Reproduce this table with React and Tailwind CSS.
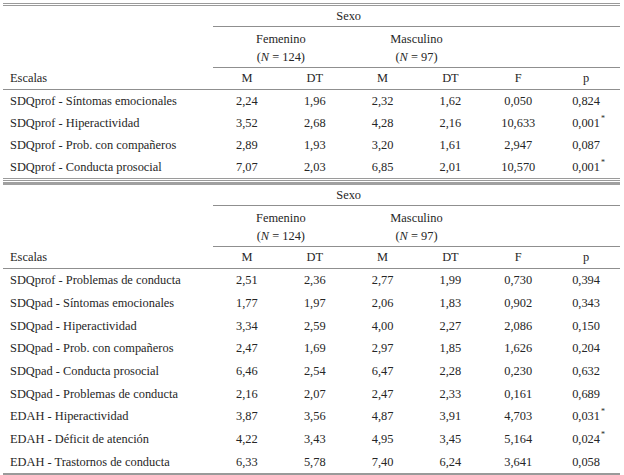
import React from "react";

const t1 = [
  ["SDQprof - Síntomas emocionales", "2,24", "1,96", "2,32", "1,62", "0,050", "0,824"],
  ["SDQprof - Hiperactividad", "3,52", "2,68", "4,28", "2,16", "10,633", "0,001*"],
  ["SDQprof - Prob. con compañeros", "2,89", "1,93", "3,20", "1,61", "2,947", "0,087"],
  ["SDQprof - Conducta prosocial", "7,07", "2,03", "6,85", "2,01", "10,570", "0,001*"],
];

const t2 = [
  ["SDQprof - Problemas de conducta", "2,51", "2,36", "2,77", "1,99", "0,730", "0,394"],
  ["SDQpad - Síntomas emocionales", "1,77", "1,97", "2,06", "1,83", "0,902", "0,343"],
  ["SDQpad - Hiperactividad", "3,34", "2,59", "4,00", "2,27", "2,086", "0,150"],
  ["SDQpad - Prob. con compañeros", "2,47", "1,69", "2,97", "1,85", "1,626", "0,204"],
  ["SDQpad - Conducta prosocial", "6,46", "2,54", "6,47", "2,28", "0,230", "0,632"],
  ["SDQpad - Problemas de conducta", "2,16", "2,07", "2,47", "2,33", "0,161", "0,689"],
  ["EDAH - Hiperactividad", "3,87", "3,56", "4,87", "3,91", "4,703", "0,031*"],
  ["EDAH - Déficit de atención", "4,22", "3,43", "4,95", "3,45", "5,164", "0,024*"],
  ["EDAH - Trastornos de conducta", "6,33", "5,78", "7,40", "6,24", "3,641", "0,058"],
];

function Val({ v }) {
  if (v.endsWith("*")) {
    return (
      <span className="relative">
        {v.slice(0, -1)}
        <span className="absolute left-[calc(100%+1px)] top-[-1px] text-[8px]">*</span>
      </span>
    );
  }
  return <span>{v}</span>;
}

function Header() {
  return (
    <>
      <div className="flex">
        <div className="w-[210px] shrink-0" />
        <div className="flex-1 grid grid-cols-6 border-b border-[#8f8f8f] h-[21px] items-center">
          <div className="col-span-4 text-center">Sexo</div>
        </div>
      </div>
      <div className="flex">
        <div className="w-[210px] shrink-0" />
        <div className="flex-1 grid grid-cols-6 border-b border-[#8f8f8f] h-[41px] pt-[3px] leading-[18px]">
          <div className="col-span-2 text-center">
            <div>Femenino</div>
            <div>
              (<i>N</i> = 124)
            </div>
          </div>
          <div className="col-span-2 text-center">
            <div>Masculino</div>
            <div>
              (<i>N</i> = 97)
            </div>
          </div>
        </div>
      </div>
      <div className="grid grid-cols-[210px_repeat(6,minmax(0,1fr))] h-[22px] items-center border-b border-[#8f8f8f]">
        <div className="pl-[7px]">Escalas</div>
        <div className="text-center">M</div>
        <div className="text-center">DT</div>
        <div className="text-center">M</div>
        <div className="text-center">DT</div>
        <div className="text-center">F</div>
        <div className="text-center">p</div>
      </div>
    </>
  );
}

function Rows({ rows, h }) {
  return rows.map((r, i) => (
    <div key={i} className={`grid grid-cols-[210px_repeat(6,minmax(0,1fr))] ${h} items-center`}>
      <div className="pl-[7px] whitespace-nowrap">{r[0]}</div>
      {r.slice(1).map((v, j) => (
        <div key={j} className="text-center">
          <Val v={v} />
        </div>
      ))}
    </div>
  ));
}

export default function App() {
  return (
    <div className="w-[624px] h-[475px] bg-white overflow-hidden text-[#262626] text-[12.4px] leading-none pt-[3px] font-['Liberation_Serif',serif]">
      <div className="ml-[3px] w-[617px]">
        <div className="border-t-[3px] border-t-[#9a9a9a] border-b-[3px] border-b-[#9a9a9a] border-double">
          <Header />
          <Rows rows={t1} h="h-[22px]" />
        </div>
        <div className="mt-[1px] border-t-[3px] border-t-[#a0a0a0] border-b-[2px] border-b-[#9a9a9a] border-solid">
          <Header />
          <Rows rows={t2} h="h-[22.7px]" />
        </div>
      </div>
    </div>
  );
}
